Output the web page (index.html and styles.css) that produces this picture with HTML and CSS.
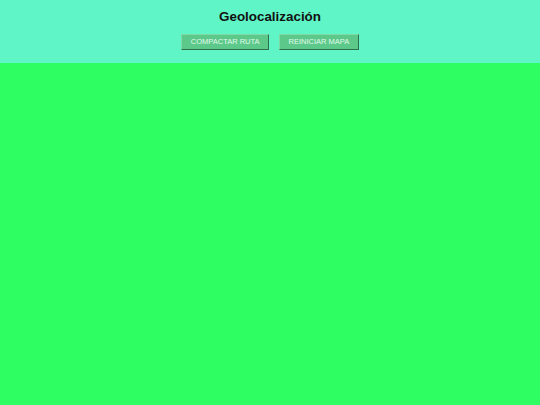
FILE: index.html
```html
<!DOCTYPE html>
<html lang="es">
<head>
<meta charset="utf-8">
<title>Geolocalización</title>
<link rel="stylesheet" href="styles.css">
</head>
<body>
<header class="header">
  <h1 class="title">Geolocalización</h1>
  <div class="actions">
    <button class="btn">COMPACTAR RUTA</button>
    <button class="btn">REINICIAR MAPA</button>
  </div>
</header>
<main class="map"></main>
</body>
</html>
```

FILE: styles.css
```css
html, body {
  margin: 0;
  padding: 0;
  height: 100%;
}
body {
  font-family: "Liberation Sans", Arial, sans-serif;
  display: flex;
  flex-direction: column;
  background: #2efe62;
}
.header {
  background: #5ff5c6;
  height: 63px;
  display: flex;
  flex-direction: column;
  align-items: center;
  box-sizing: border-box;
  padding-top: 8px;
}
.title {
  margin: 0;
  font-size: 13.4px;
  font-weight: bold;
  color: #111;
  line-height: 17px;
}
.actions {
  display: flex;
  gap: 10px;
  margin-top: 9px;
}
.btn {
  font-family: "Liberation Sans", Arial, sans-serif;
  font-size: 7.5px;
  color: #e2faea;
  background: #5cc98b;
  border: 1px solid #2f6e4a;
  border-top-color: #7fd9a5;
  border-left-color: #7fd9a5;
  height: 16px;
  padding: 0 8.5px;
  margin: 0;
  line-height: 14px;
}
.map {
  flex: 1;
  background: #2efe62;
}
```
